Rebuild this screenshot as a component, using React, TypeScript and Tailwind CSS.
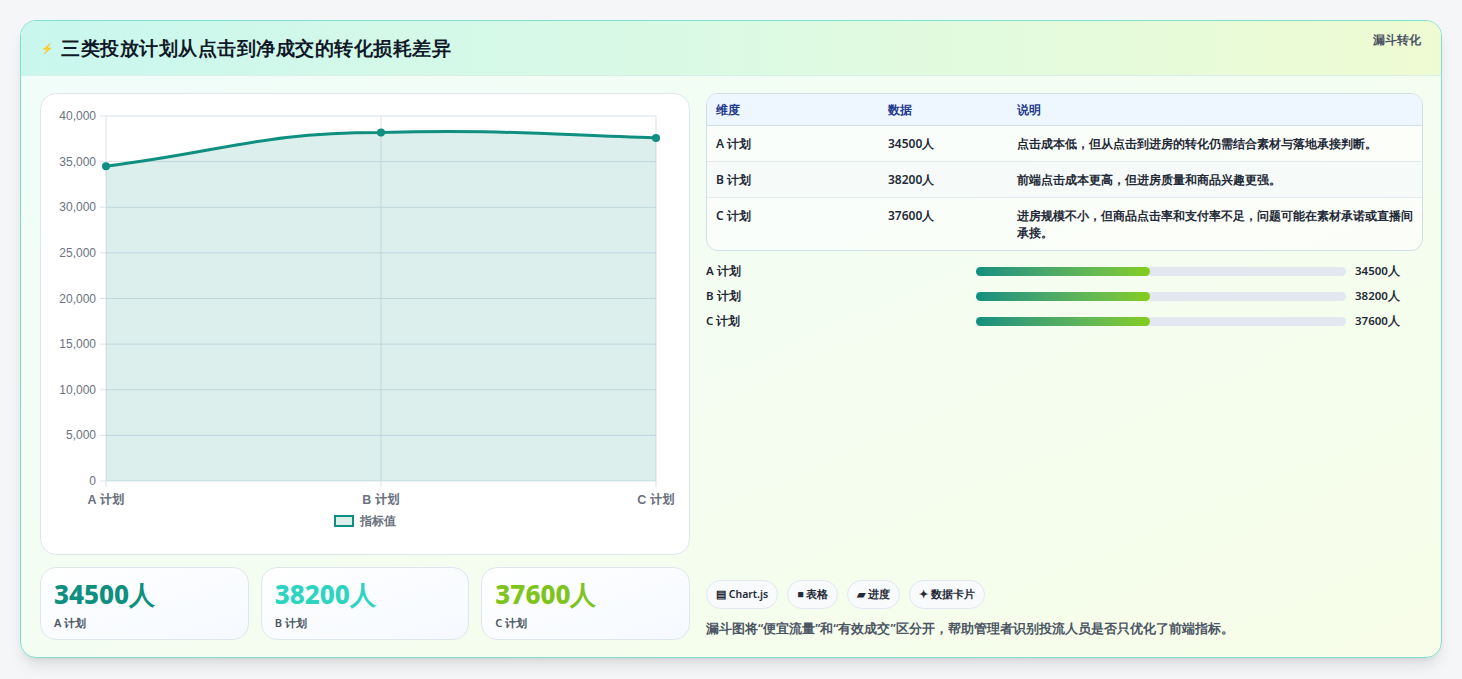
import React from 'react';

const rows = [
  { name: 'A 计划', value: '34500人', note: '点击成本低，但从点击到进房的转化仍需结合素材与落地承接判断。' },
  { name: 'B 计划', value: '38200人', note: '前端点击成本更高，但进房质量和商品兴趣更强。' },
  { name: 'C 计划', value: '37600人', note: '进房规模不小，但商品点击率和支付率不足，问题可能在素材承诺或直播间承接。' },
];

const stats = [
  { v: '34500人', l: 'A 计划', c: 'text-[#0f8f7f]' },
  { v: '38200人', l: 'B 计划', c: 'text-[#2dd4bf]' },
  { v: '37600人', l: 'C 计划', c: 'text-[#7fc41c]' },
];

function Chart() {
  const x0 = 65, x1 = 615, yTop = 22, yBot = 387;
  const ys = [0, 5000, 10000, 15000, 20000, 25000, 30000, 35000, 40000];
  const py = (v: number) => yBot - ((yBot - yTop) * v) / 40000;
  const pts = [
    [x0, py(34500)],
    [(x0 + x1) / 2, py(38200)],
    [x1, py(37600)],
  ];
  const line = `M${pts[0][0]},${pts[0][1]} C${pts[0][0] + 120},${pts[0][1] - 15} ${pts[1][0] - 120},${pts[1][1]} ${pts[1][0]},${pts[1][1]} C${pts[1][0] + 110},${pts[1][1] - 3} ${pts[2][0] - 120},${pts[2][1] - 4} ${pts[2][0]},${pts[2][1]}`;
  return (
    <svg width="649" height="420" className="block">
      {ys.map((v) => (
        <g key={v}>
          <line x1={x0 - 6} x2={x1} y1={py(v)} y2={py(v)} stroke="#dbe3ea" strokeWidth="1" />
          <text x={x0 - 10} y={py(v) + 4} textAnchor="end" fontSize="12" fill="#6b7280" fontFamily="Liberation Sans, sans-serif">
            {v.toLocaleString('en-US')}
          </text>
        </g>
      ))}
      {[x0, (x0 + x1) / 2, x1].map((x) => (
        <line key={x} x1={x} x2={x} y1={yTop} y2={yBot + 6} stroke="#dbe3ea" />
      ))}
      <path d={`${line} L${x1},${yBot} L${x0},${yBot} Z`} fill="#0f8f7f" fillOpacity="0.14" />
      <path d={line} fill="none" stroke="#0f8f7f" strokeWidth="3" />
      {pts.map(([x, y]) => (
        <circle key={x} cx={x} cy={y} r="4" fill="#0f8f7f" />
      ))}
      {['A 计划', 'B 计划', 'C 计划'].map((t, i) => (
        <text key={t} x={[x0, (x0 + x1) / 2, x1][i]} y={410} textAnchor="middle" fontSize="12.5" fill="#6b7280" fontWeight="600" fontFamily="Liberation Sans, 'Noto Sans CJK SC', sans-serif">
          {t}
        </text>
      ))}
    </svg>
  );
}

export default function App() {
  return (
    <div className="min-h-[679px] bg-[#f5f6f7] px-5 pt-5 font-['Inter','Noto_Sans_CJK_SC',sans-serif]">
      <div className="h-[638px] overflow-hidden rounded-2xl border border-[#7fe0cf] bg-gradient-to-br from-[#f0fdfa] to-[#f7fde8] shadow-lg">
        <div className="flex h-[55px] items-center justify-between border-b border-[#d8f0e6] bg-gradient-to-r from-[#c9f7ee] via-[#dcfae4] to-[#eefbd2] px-5">
          <div className="flex items-center gap-2">
            <span className="text-[10px] text-[#2563eb]">⚡</span>
            <h1 className="text-[19px] font-extrabold tracking-[0.5px] text-[#111827]">三类投放计划从点击到净成交的转化损耗差异</h1>
          </div>
          <span className="-mt-4 text-[12px] font-semibold text-[#4b5563]">漏斗转化</span>
        </div>
        <div className="flex gap-4 pl-[19px] pr-[18px] pt-[17px]">
          <div className="flex w-[650px] flex-col gap-3">
            <div className="h-[462px] rounded-2xl border border-[#dfe7ee] bg-white">
              <Chart />
              <div className="-mt-[2px] flex items-center justify-center gap-1.5 text-[12px] font-semibold text-[#6b7280]">
                <span className="h-[12px] w-[20px] border-2 border-[#0f8f7f] bg-[#dcefeb]" />
                指标值
              </div>
            </div>
            <div className="flex gap-3">
              {stats.map((s) => (
                <div key={s.l} className="h-[73px] flex-1 rounded-2xl border border-[#dfe7ee] bg-gradient-to-br from-white to-[#f5f9ff] px-[13px] pt-[10px]">
                  <div className={`text-[26px] font-extrabold leading-[32px] ${s.c}`}>{s.v}</div>
                  <div className="mt-[5px] text-[11px] font-semibold text-[#4b5563]">{s.l}</div>
                </div>
              ))}
            </div>
          </div>
          <div className="flex h-[546px] flex-1 flex-col">
            <div className="overflow-hidden rounded-xl border border-[#cfdfe5] bg-white/60 text-[12px] font-semibold">
              <div className="flex h-[32px] items-center border-b border-[#cfdfe5] bg-[#eef6ff] text-[#1e3a8a]">
                <span className="w-[181px] pl-[9px]">维度</span>
                <span className="w-[129px]">数据</span>
                <span className="flex-1">说明</span>
              </div>
              {rows.map((r, i) => (
                <div key={r.name} className={`flex items-start border-b border-[#e3ebef] py-[9px] text-[#1f2937] last:border-b-0 ${i === 1 ? 'bg-[#f6fbf9]' : ''}`}>
                  <span className="w-[181px] pl-[9px] leading-[17px]">{r.name}</span>
                  <span className="w-[129px] leading-[17px]">{r.value}</span>
                  <span className="flex-1 pr-2 leading-[17px]">{r.note}</span>
                </div>
              ))}
            </div>
            <div className="mt-[12px] flex flex-col gap-[9px] pr-[14px] text-[11.5px] font-semibold text-[#1f2937]">
              {rows.map((r) => (
                <div key={r.name} className="flex h-[16px] items-center">
                  <span className="w-[270px]">{r.name}</span>
                  <div className="h-[9px] flex-1 rounded-full bg-[#e2e8f0]">
                    <div className="h-full w-[47%] rounded-full bg-gradient-to-r from-[#0f8f7f] to-[#84cc16]" />
                  </div>
                  <span className="w-[63px] pl-[9px]">{r.value}</span>
                </div>
              ))}
            </div>
            <div className="mt-auto flex gap-[9px] text-[10.5px] font-semibold text-[#1f2937]">
              {['▤ Chart.js', '■ 表格', '▰ 进度', '✦ 数据卡片'].map((t) => (
                <span key={t} className="rounded-full border border-[#e2e8f0] bg-[#f8fafc] px-[9px] py-[6px]">{t}</span>
              ))}
            </div>
            <p className="mt-[11px] text-[12.5px] font-semibold text-[#4b5563]">漏斗图将“便宜流量”和“有效成交”区分开，帮助管理者识别投流人员是否只优化了前端指标。</p>
          </div>
        </div>
      </div>
    </div>
  );
}
